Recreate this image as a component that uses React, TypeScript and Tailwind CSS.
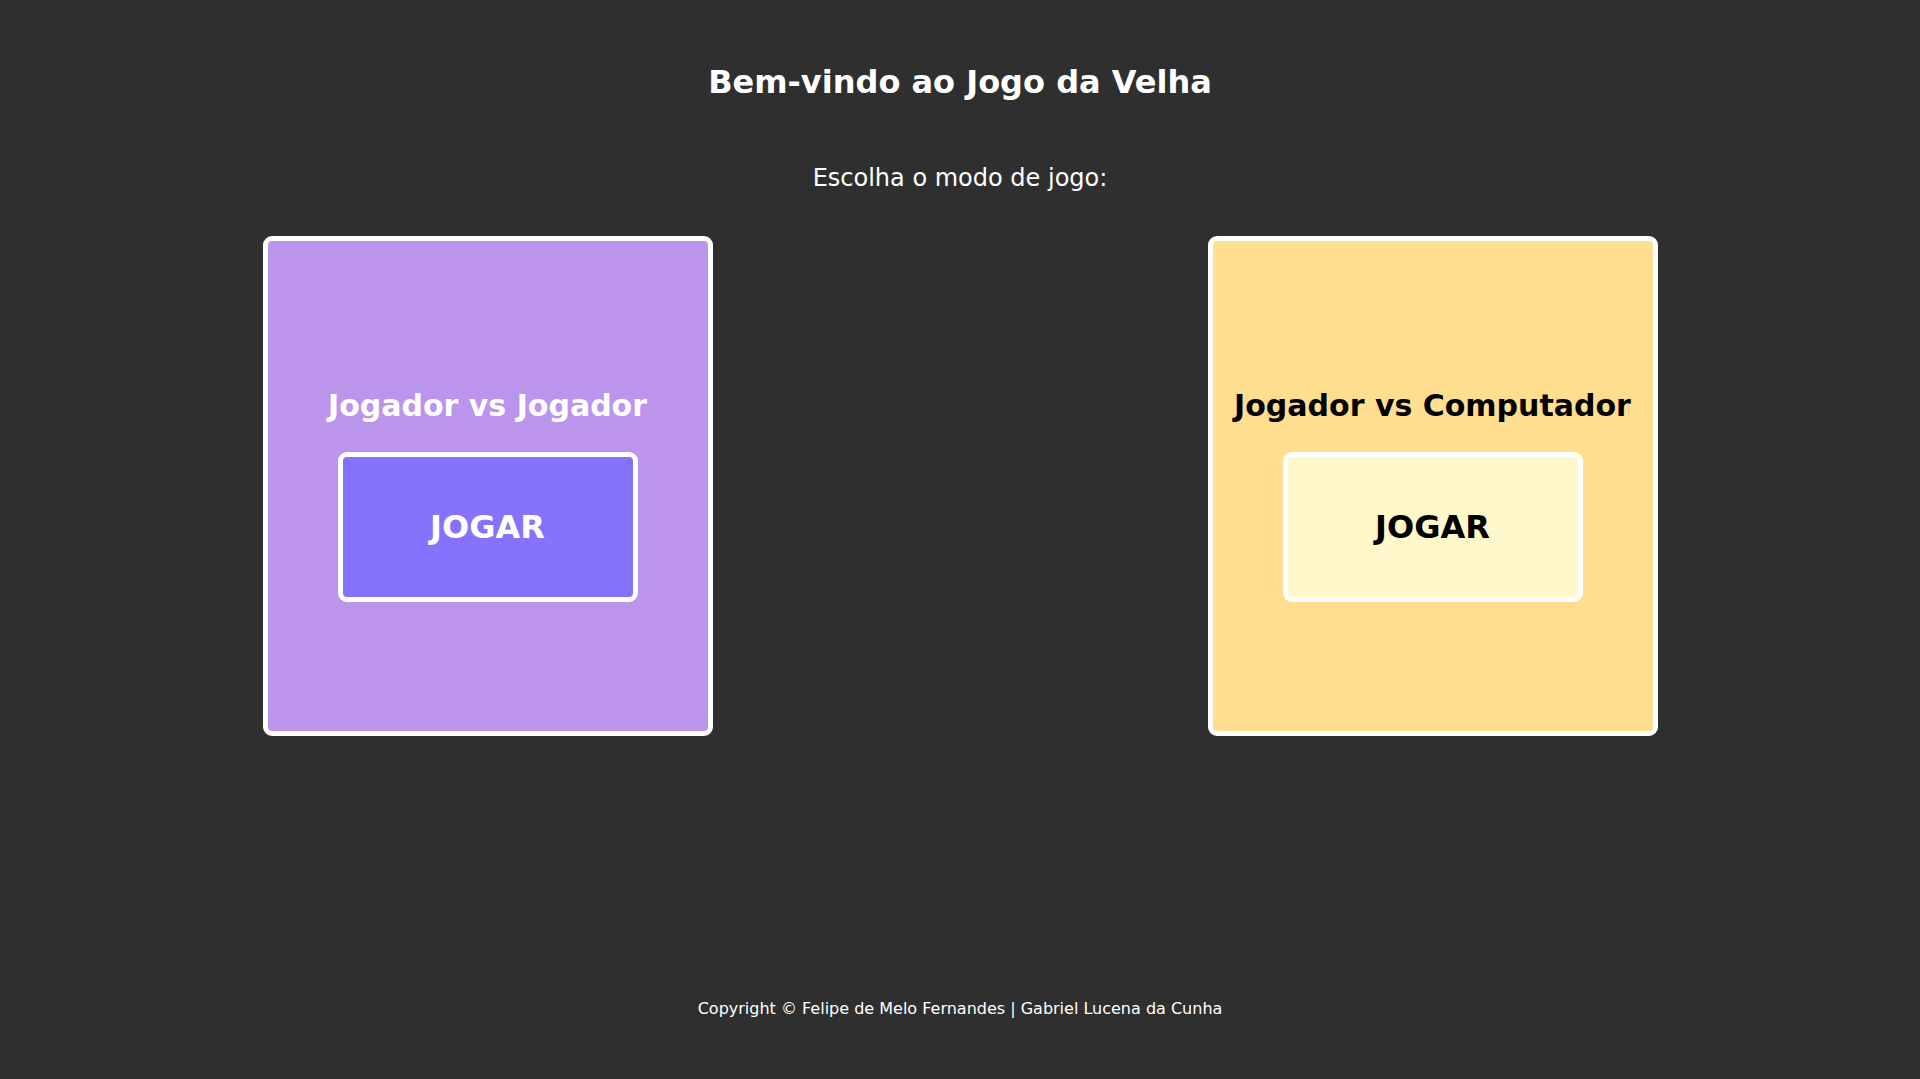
export default function App() {
  return (
    <div className="min-h-screen w-full bg-[#2f2f2f] flex flex-col items-center text-white font-['DejaVu_Sans',Verdana,sans-serif]">
      <h1 className="pt-[63px] text-[32px] leading-[38px] font-bold">Bem-vindo ao Jogo da Velha</h1>
      <p className="mt-[63px] text-[24px] leading-[28px]">Escolha o modo de jogo:</p>

      {/* Mode cards */}
      <div className="mt-[44px] flex justify-center gap-[495px]">
        <div className="w-[450px] h-[500px] bg-[#bb95eb] border-[5px] border-white rounded-[9px] flex flex-col items-center justify-center pt-[17px]">
          <h2 className="text-[30px] leading-[38px] font-bold text-white">Jogador vs Jogador</h2>
          <button className="mt-[27px] w-[300px] h-[150px] bg-[#8573fe] border-[5px] border-white rounded-[9px] text-[32px] font-bold text-white">
            JOGAR
          </button>
        </div>
        <div className="w-[450px] h-[500px] bg-[#ffde8f] border-[5px] border-white rounded-[9px] flex flex-col items-center justify-center pt-[17px]">
          <h2 className="text-[30px] leading-[38px] font-bold text-black">Jogador vs Computador</h2>
          <button className="mt-[27px] w-[300px] h-[150px] bg-[#fff8ca] border-[5px] border-white rounded-[9px] text-[32px] font-bold text-black">
            JOGAR
          </button>
        </div>
      </div>

      <footer className="mt-auto pb-[60px] text-[16px] leading-[20px]">
        Copyright © Felipe de Melo Fernandes | Gabriel Lucena da Cunha
      </footer>
    </div>
  );
}
